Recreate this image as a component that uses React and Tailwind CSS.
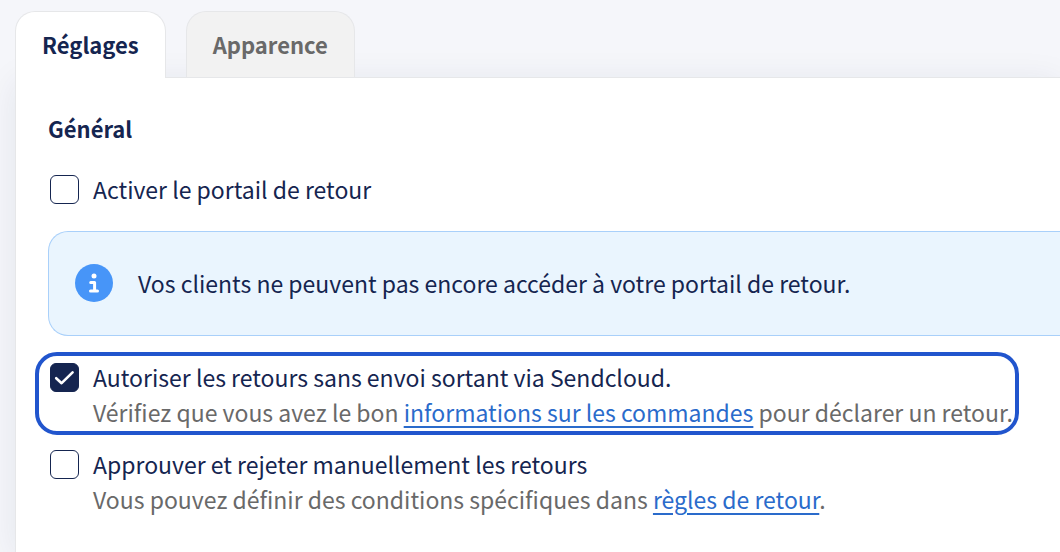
function Check({ id, checked }) {
  return (
    <span className="relative mt-[3px] flex size-[29px] shrink-0">
      <input
        id={id}
        type="checkbox"
        defaultChecked={checked}
        className="peer size-[29px] appearance-none rounded-md border border-[#152550] bg-white checked:bg-[#152550]"
      />
      <svg
        viewBox="0 0 29 29"
        className="pointer-events-none absolute inset-0 hidden size-[29px] peer-checked:block"
        fill="none"
        stroke="white"
        strokeWidth="2.6"
        strokeLinecap="round"
        strokeLinejoin="round"
      >
        <path d="M6.2 15.2l5.4 5L22.6 9.3" />
      </svg>
    </span>
  );
}

function Option({ id, label, checked, children }) {
  return (
    <div className="flex gap-[14px]">
      <Check id={id} checked={checked} />
      <div>
        <label htmlFor={id} className="block">{label}</label>
        {children && <p className="text-[#696969]">{children}</p>}
      </div>
    </div>
  );
}

function TextLink({ href, children }) {
  return (
    <a href={href} className="text-[#2a6bcb] underline decoration-2 underline-offset-4">
      {children}
    </a>
  );
}

function InfoIcon() {
  return (
    <svg viewBox="0 0 38 38" className="size-[38px] shrink-0" aria-hidden="true">
      <circle cx="19" cy="19" r="19" fill="#4795f8" />
      <circle cx="19" cy="12" r="2.5" fill="white" />
      <path d="M15.7 18.5H19.6V27M15.5 27H22.5" fill="none" stroke="white" strokeWidth="3" strokeLinecap="round" strokeLinejoin="round" />
    </svg>
  );
}

export default function App() {
  return (
    <main className="flex min-h-screen flex-col overflow-hidden bg-[#f5f6fa] pl-[15px] pt-[11px] font-['Noto_Sans_CJK_JP',sans-serif] text-[23px] leading-[35px] text-[#152550]">
      <div role="tablist" className="relative z-10 flex gap-5 text-[22px] font-bold leading-[35px]">
        <button
          role="tab"
          aria-selected="true"
          className="-mb-px rounded-t-[20px] border border-b-0 border-[#e6e7e9] bg-white px-[26px] pb-4 pt-[15px]"
        >
          Réglages
        </button>
        <button
          role="tab"
          aria-selected="false"
          className="rounded-t-[20px] border border-b-0 border-[#e6e7e9] bg-[#f2f2f2] px-[26px] pb-[15px] pt-[15px] text-[#696969]"
        >
          Apparence
        </button>
      </div>
      <section className="grow border-l border-t border-[#e6e7e9] bg-white pb-8 pl-8 pt-[33px] shadow-[0_4px_32px_rgba(21,37,80,0.08)]">
        <h2 className="text-[22px] font-bold leading-[35px]">Général</h2>
        <div className="mt-[26px] pl-[2px]">
          <Option id="portal" label="Activer le portail de retour" />
        </div>
        <div className="mt-6 flex items-center gap-[25px] rounded-l-[20px] border border-r-0 border-[#a9d0fa] bg-[#eaf5fe] px-[26px] pb-[33px] pt-8">
          <InfoIcon />
          <p>Vos clients ne peuvent pas encore accéder à votre portail de retour.</p>
        </div>
        <div className="-ml-[13px] mt-4 w-fit rounded-[22px] border-4 border-[#2155cd] pb-px pl-[11px] pr-[2px] pt-1">
          <Option id="allow" checked label="Autoriser les retours sans envoi sortant via Sendcloud.">
            Vérifiez que vous avez le bon <TextLink href="#commandes">informations sur les commandes</TextLink> pour déclarer un retour.
          </Option>
        </div>
        <div className="mt-3 pl-[2px]">
          <Option id="approve" label="Approuver et rejeter manuellement les retours">
            Vous pouvez définir des conditions spécifiques dans <TextLink href="#regles">règles de retour</TextLink>.
          </Option>
        </div>
      </section>
    </main>
  );
}
